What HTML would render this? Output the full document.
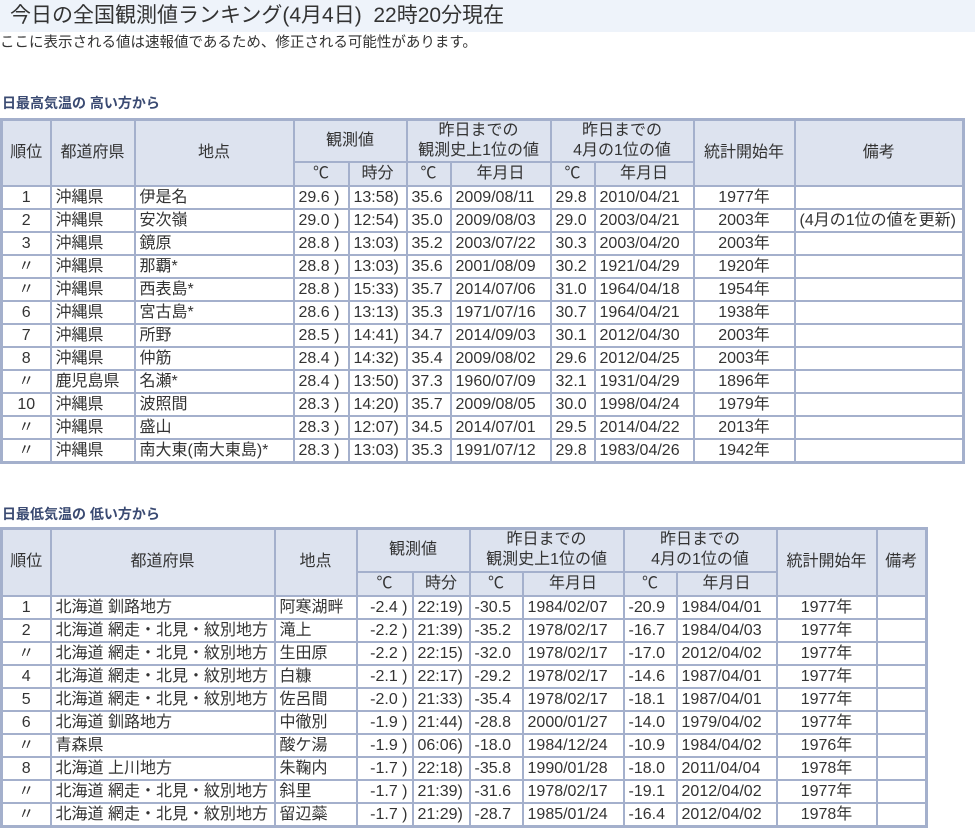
<!DOCTYPE html>
<html><head><meta charset="utf-8"><style>
body{margin:0;background:#fff;font-family:"Liberation Sans","Noto Sans CJK JP",sans-serif;color:#333;width:975px;height:827px;overflow:hidden;position:relative}
.title{position:absolute;left:0;top:0;width:975px;height:32px;background:#eef3fa;font-size:21px;line-height:32px;padding-left:10px;box-sizing:border-box;color:#333}
.note{position:absolute;left:0;top:33px;font-size:14.5px;line-height:20px;color:#333}
.h{position:absolute;left:2px;font-size:14px;font-weight:bold;color:#3a4a72}
table{position:absolute;left:0;border-collapse:collapse;table-layout:fixed;font-size:16px;border:3px solid #a4b0cc}
td,th{border:2px solid #a4b0cc;padding:0 4px;white-space:nowrap;overflow:hidden;height:21px;line-height:21px;font-weight:normal;box-sizing:content-box}
th{background:#dde3ef;text-align:center;color:#333;line-height:20px}
td.c{text-align:center}td.r{text-align:right}
</style></head><body>
<div class="title">今日の全国観測値ランキング(4月4日)&nbsp; 22時20分現在</div>
<div class="note">ここに表示される値は速報値であるため、修正される可能性があります。</div>
<div class="h" style="top:93px">日最高気温の 高い方から</div>
<table style="top:118px;width:962px">
<colgroup><col style="width:49px"><col style="width:84px"><col style="width:159px"><col style="width:55px"><col style="width:58px"><col style="width:44px"><col style="width:100px"><col style="width:44px"><col style="width:99px"><col style="width:101px"><col style="width:169px"></colgroup>
<tr style="height:41px"><th rowspan="2">順位</th><th rowspan="2">都道府県</th><th rowspan="2">地点</th><th colspan="2">観測値</th><th colspan="2">昨日までの<br>観測史上1位の値</th><th colspan="2">昨日までの<br>4月の1位の値</th><th rowspan="2">統計開始年</th><th rowspan="2">備考</th></tr>
<tr style="height:24px"><th>℃</th><th>時分</th><th>℃</th><th>年月日</th><th>℃</th><th>年月日</th></tr>
<tr><td class="c">1</td><td>沖縄県</td><td>伊是名</td><td>29.6 )</td><td>13:58)</td><td>35.6</td><td>2009/08/11</td><td>29.8</td><td>2010/04/21</td><td class="c">1977年</td><td></td></tr>
<tr><td class="c">2</td><td>沖縄県</td><td>安次嶺</td><td>29.0 )</td><td>12:54)</td><td>35.0</td><td>2009/08/03</td><td>29.0</td><td>2003/04/21</td><td class="c">2003年</td><td>(4月の1位の値を更新)</td></tr>
<tr><td class="c">3</td><td>沖縄県</td><td>鏡原</td><td>28.8 )</td><td>13:03)</td><td>35.2</td><td>2003/07/22</td><td>30.3</td><td>2003/04/20</td><td class="c">2003年</td><td></td></tr>
<tr><td class="c">〃</td><td>沖縄県</td><td>那覇*</td><td>28.8 )</td><td>13:03)</td><td>35.6</td><td>2001/08/09</td><td>30.2</td><td>1921/04/29</td><td class="c">1920年</td><td></td></tr>
<tr><td class="c">〃</td><td>沖縄県</td><td>西表島*</td><td>28.8 )</td><td>15:33)</td><td>35.7</td><td>2014/07/06</td><td>31.0</td><td>1964/04/18</td><td class="c">1954年</td><td></td></tr>
<tr><td class="c">6</td><td>沖縄県</td><td>宮古島*</td><td>28.6 )</td><td>13:13)</td><td>35.3</td><td>1971/07/16</td><td>30.7</td><td>1964/04/21</td><td class="c">1938年</td><td></td></tr>
<tr><td class="c">7</td><td>沖縄県</td><td>所野</td><td>28.5 )</td><td>14:41)</td><td>34.7</td><td>2014/09/03</td><td>30.1</td><td>2012/04/30</td><td class="c">2003年</td><td></td></tr>
<tr><td class="c">8</td><td>沖縄県</td><td>仲筋</td><td>28.4 )</td><td>14:32)</td><td>35.4</td><td>2009/08/02</td><td>29.6</td><td>2012/04/25</td><td class="c">2003年</td><td></td></tr>
<tr><td class="c">〃</td><td>鹿児島県</td><td>名瀬*</td><td>28.4 )</td><td>13:50)</td><td>37.3</td><td>1960/07/09</td><td>32.1</td><td>1931/04/29</td><td class="c">1896年</td><td></td></tr>
<tr><td class="c">10</td><td>沖縄県</td><td>波照間</td><td>28.3 )</td><td>14:20)</td><td>35.7</td><td>2009/08/05</td><td>30.0</td><td>1998/04/24</td><td class="c">1979年</td><td></td></tr>
<tr><td class="c">〃</td><td>沖縄県</td><td>盛山</td><td>28.3 )</td><td>12:07)</td><td>34.5</td><td>2014/07/01</td><td>29.5</td><td>2014/04/22</td><td class="c">2013年</td><td></td></tr>
<tr><td class="c">〃</td><td>沖縄県</td><td>南大東(南大東島)*</td><td>28.3 )</td><td>13:03)</td><td>35.3</td><td>1991/07/12</td><td>29.8</td><td>1983/04/26</td><td class="c">1942年</td><td></td></tr>
</table>
<div class="h" style="top:504px">日最低気温の 低い方から</div>
<table style="top:527px;width:925px">
<colgroup><col style="width:49px"><col style="width:224px"><col style="width:82px"><col style="width:56px"><col style="width:57px"><col style="width:53px"><col style="width:101px"><col style="width:53px"><col style="width:100px"><col style="width:100px"><col style="width:50px"></colgroup>
<tr style="height:43px"><th rowspan="2">順位</th><th rowspan="2">都道府県</th><th rowspan="2">地点</th><th colspan="2">観測値</th><th colspan="2">昨日までの<br>観測史上1位の値</th><th colspan="2">昨日までの<br>4月の1位の値</th><th rowspan="2">統計開始年</th><th rowspan="2">備考</th></tr>
<tr style="height:24px"><th>℃</th><th>時分</th><th>℃</th><th>年月日</th><th>℃</th><th>年月日</th></tr>
<tr><td class="c">1</td><td>北海道 釧路地方</td><td>阿寒湖畔</td><td class="r">-2.4 )</td><td>22:19)</td><td>-30.5</td><td>1984/02/07</td><td>-20.9</td><td>1984/04/01</td><td class="c">1977年</td><td></td></tr>
<tr><td class="c">2</td><td>北海道 網走・北見・紋別地方</td><td>滝上</td><td class="r">-2.2 )</td><td>21:39)</td><td>-35.2</td><td>1978/02/17</td><td>-16.7</td><td>1984/04/03</td><td class="c">1977年</td><td></td></tr>
<tr><td class="c">〃</td><td>北海道 網走・北見・紋別地方</td><td>生田原</td><td class="r">-2.2 )</td><td>22:15)</td><td>-32.0</td><td>1978/02/17</td><td>-17.0</td><td>2012/04/02</td><td class="c">1977年</td><td></td></tr>
<tr><td class="c">4</td><td>北海道 網走・北見・紋別地方</td><td>白糠</td><td class="r">-2.1 )</td><td>22:17)</td><td>-29.2</td><td>1978/02/17</td><td>-14.6</td><td>1987/04/01</td><td class="c">1977年</td><td></td></tr>
<tr><td class="c">5</td><td>北海道 網走・北見・紋別地方</td><td>佐呂間</td><td class="r">-2.0 )</td><td>21:33)</td><td>-35.4</td><td>1978/02/17</td><td>-18.1</td><td>1987/04/01</td><td class="c">1977年</td><td></td></tr>
<tr><td class="c">6</td><td>北海道 釧路地方</td><td>中徹別</td><td class="r">-1.9 )</td><td>21:44)</td><td>-28.8</td><td>2000/01/27</td><td>-14.0</td><td>1979/04/02</td><td class="c">1977年</td><td></td></tr>
<tr><td class="c">〃</td><td>青森県</td><td>酸ケ湯</td><td class="r">-1.9 )</td><td>06:06)</td><td>-18.0</td><td>1984/12/24</td><td>-10.9</td><td>1984/04/02</td><td class="c">1976年</td><td></td></tr>
<tr><td class="c">8</td><td>北海道 上川地方</td><td>朱鞠内</td><td class="r">-1.7 )</td><td>22:18)</td><td>-35.8</td><td>1990/01/28</td><td>-18.0</td><td>2011/04/04</td><td class="c">1978年</td><td></td></tr>
<tr><td class="c">〃</td><td>北海道 網走・北見・紋別地方</td><td>斜里</td><td class="r">-1.7 )</td><td>21:39)</td><td>-31.6</td><td>1978/02/17</td><td>-19.1</td><td>2012/04/02</td><td class="c">1977年</td><td></td></tr>
<tr><td class="c">〃</td><td>北海道 網走・北見・紋別地方</td><td>留辺蘂</td><td class="r">-1.7 )</td><td>21:29)</td><td>-28.7</td><td>1985/01/24</td><td>-16.4</td><td>2012/04/02</td><td class="c">1978年</td><td></td></tr>
</table>
</body></html>
